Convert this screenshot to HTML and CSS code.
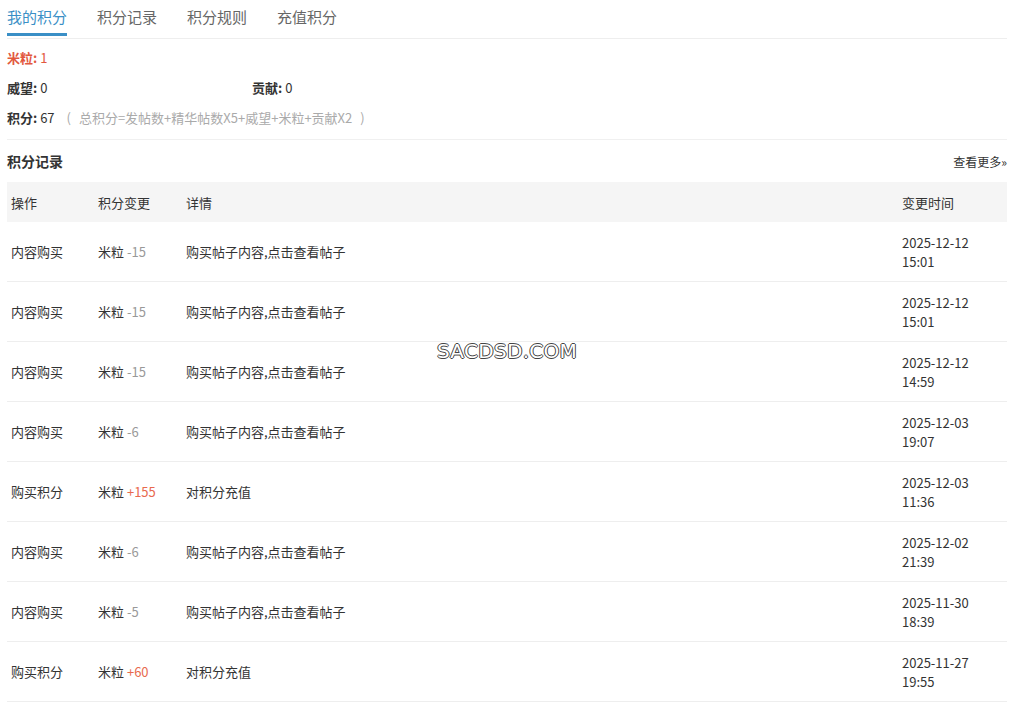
FILE: index.html
```html
<!DOCTYPE html>
<html lang="zh-CN">
<head>
    <meta charset="UTF-8">
    <title>我的积分</title>
    <link rel="stylesheet" href="styles.css">
</head>
<body>
    <div class="wrap">
        <ul class="tabs">
            <li class="active">我的积分</li>
            <li>积分记录</li>
            <li>积分规则</li>
            <li>充值积分</li>
        </ul>

        <div class="summary">
            <p class="rice"><b>米粒:</b> 1</p>
            <p class="pair">
                <span class="half"><b>威望:</b> 0</span>
                <span class="half"><b>贡献:</b> 0</span>
            </p>
            <p><b>积分:</b> 67<span class="note">( 总积分=发帖数+精华帖数X5+威望+米粒+贡献X2 )</span></p>
        </div>

        <div class="log-head">
            <h3>积分记录</h3>
            <a href="#" class="more">查看更多»</a>
        </div>

        <table class="log">
            <thead>
                <tr>
                    <th class="c-op">操作</th>
                    <th class="c-chg">积分变更</th>
                    <th>详情</th>
                    <th class="c-time">变更时间</th>
                </tr>
            </thead>
            <tbody>
                <tr><td>内容购买</td><td>米粒 <span class="minus">-15</span></td><td>购买帖子内容,点击查看帖子</td><td>2025-12-12<br>15:01</td></tr>
                <tr><td>内容购买</td><td>米粒 <span class="minus">-15</span></td><td>购买帖子内容,点击查看帖子</td><td>2025-12-12<br>15:01</td></tr>
                <tr><td>内容购买</td><td>米粒 <span class="minus">-15</span></td><td>购买帖子内容,点击查看帖子</td><td>2025-12-12<br>14:59</td></tr>
                <tr><td>内容购买</td><td>米粒 <span class="minus">-6</span></td><td>购买帖子内容,点击查看帖子</td><td>2025-12-03<br>19:07</td></tr>
                <tr><td>购买积分</td><td>米粒 <span class="plus">+155</span></td><td>对积分充值</td><td>2025-12-03<br>11:36</td></tr>
                <tr><td>内容购买</td><td>米粒 <span class="minus">-6</span></td><td>购买帖子内容,点击查看帖子</td><td>2025-12-02<br>21:39</td></tr>
                <tr><td>内容购买</td><td>米粒 <span class="minus">-5</span></td><td>购买帖子内容,点击查看帖子</td><td>2025-11-30<br>18:39</td></tr>
                <tr><td>购买积分</td><td>米粒 <span class="plus">+60</span></td><td>对积分充值</td><td>2025-11-27<br>19:55</td></tr>
            </tbody>
        </table>
    </div>

    <div class="watermark">SACDSD.COM</div>
</body>
</html>
```

FILE: styles.css
```css
body {
    margin: 0;
    background: #fff;
    font-family: "Noto Sans CJK SC", "Microsoft YaHei", sans-serif;
    font-size: 13px;
    color: #333;
}

.wrap {
    padding: 0 7px;
    width: 1000px;
}

.tabs {
    list-style: none;
    margin: 0;
    padding: 0;
    display: flex;
    gap: 30px;
    border-bottom: 1px solid #eee;
    height: 38px;
}

.tabs li {
    font-size: 15px;
    color: #666;
    line-height: 33px;
    height: 33px;
    border-bottom: 3px solid transparent;
}

.tabs li.active {
    color: #3a8fc6;
    border-bottom-color: #3a8fc6;
}

.summary {
    padding-top: 4px;
    border-bottom: 1px solid #f0f0f0;
    padding-bottom: 6px;
}

.summary p {
    margin: 0;
    line-height: 30px;
    height: 30px;
}

.summary b {
    color: #333;
}

.summary .rice,
.summary .rice b {
    color: #e2583e;
}

.pair {
    display: flex;
}

.half {
    width: 245px;
}

.note {
    color: #aaa;
    margin-left: 12px;
    word-spacing: 5px;
}

.log-head {
    display: flex;
    justify-content: space-between;
    align-items: center;
    height: 42px;
}

.log-head h3 {
    margin: 0;
    font-size: 14px;
    font-weight: bold;
    color: #333;
}

.more {
    font-size: 12px;
    color: #333;
    text-decoration: none;
}

.log {
    width: 100%;
    border-collapse: collapse;
}

.log th {
    background: #f5f5f5;
    height: 40px;
    text-align: left;
    font-weight: normal;
    color: #333;
    padding: 0 4px;
}

.log td {
    height: 59px;
    padding: 0 4px;
    border-bottom: 1px solid #eee;
    line-height: 19px;
}

.c-op {
    width: 79px;
}

.c-chg {
    width: 80px;
}

.c-time {
    width: 101px;
}

.minus {
    color: #999;
}

.plus {
    color: #e86a4e;
}

.watermark {
    position: absolute;
    left: 437px;
    top: 339px;
    font-family: "DejaVu Sans", sans-serif;
    font-size: 20px;
    letter-spacing: 0.3px;
    color: #fff;
    text-shadow: -1px 0 #444, 1px 0 #444, 0 -1px #444, 0 1px #444;
}
```
